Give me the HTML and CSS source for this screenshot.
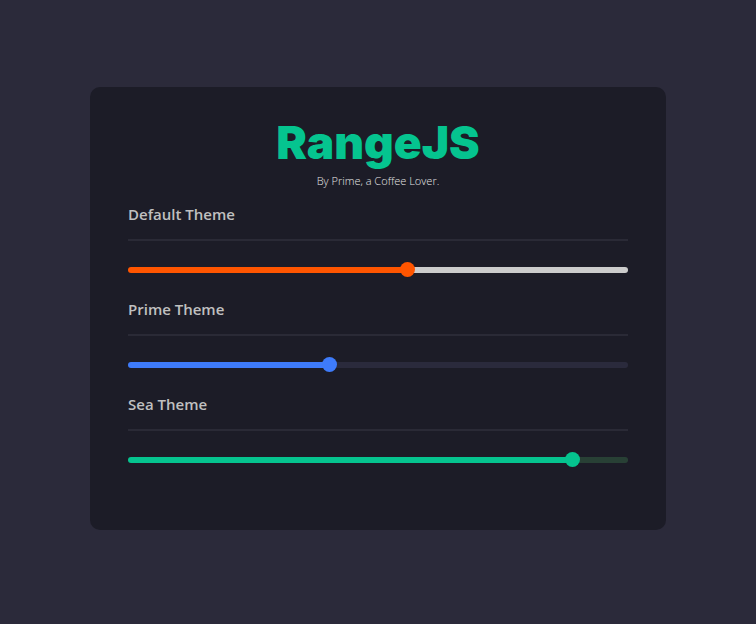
FILE: index.html
```html
<!DOCTYPE html>
<html lang="en">
<head>
<meta charset="utf-8">
<meta name="viewport" content="width=device-width, initial-scale=1">
<title>RangeJS</title>
<link rel="stylesheet" href="styles.css">
</head>
<body>
<main class="card">
  <header class="header">
    <h1 class="title">RangeJS</h1>
    <p class="byline">By Prime, a Coffee Lover.</p>
  </header>
  <section class="group">
    <label class="label" for="default-range">Default Theme</label>
    <input class="range range-default" id="default-range" type="range" min="0" max="100" step="any" value="56" style="--value: 56">
  </section>
  <section class="group">
    <label class="label" for="prime-range">Prime Theme</label>
    <input class="range range-prime" id="prime-range" type="range" min="0" max="100" step="any" value="40" style="--value: 40">
  </section>
  <section class="group">
    <label class="label" for="sea-range">Sea Theme</label>
    <input class="range range-sea" id="sea-range" type="range" min="0" max="100" step="any" value="90" style="--value: 90">
  </section>
</main>
</body>
</html>
```
FILE: styles.css
```css
* {
  box-sizing: border-box;
}

body {
  margin: 0;
  min-height: 100vh;
  padding: 80px 90px;
  display: flex;
  align-items: center;
  justify-content: center;
  background: #2b2a3a;
  color: #c0c0c0;
  font-family: "Open Sans", "Noto Sans", sans-serif;
}

.card {
  flex: 1;
  max-width: 576px;
  margin-bottom: 7px;
  padding: 24px 38px 50px;
  border-radius: 10px;
  background: #1c1c27;
}

.header {
  text-align: center;
}

.title {
  margin: 0;
  color: #05c48f;
  font-family: Inter, "Open Sans", sans-serif;
  font-size: 46px;
  font-weight: 900;
  line-height: 62px;
}

.byline {
  margin: 0 0 6px;
  color: #e4e4e4;
  font-size: 11px;
  font-weight: 300;
  line-height: 16px;
}

.group {
  height: 95px;
}

.label {
  display: block;
  padding: 8px 0 14px;
  border-bottom: 2px solid #2a2a36;
  font-size: 15px;
  font-weight: 600;
  line-height: 22px;
}

.range {
  display: block;
  appearance: none;
  width: 100%;
  height: 15px;
  margin: 21px 0 0;
  background: none;
}

.range::-webkit-slider-runnable-track {
  height: 6px;
  border-radius: 3px;
  background: linear-gradient(to right, var(--fill) calc(var(--value) * 1%), var(--rest) 0);
}

.range::-webkit-slider-thumb {
  appearance: none;
  width: 15px;
  height: 15px;
  margin-top: -5px;
  border-radius: 50%;
  background: var(--fill);
}

.range-default {
  --fill: #ff5500;
  --rest: #cccccc;
}

.range-prime {
  --fill: #3e7bfa;
  --rest: #2a2a3c;
}

.range-sea {
  --fill: #05c48f;
  --rest: #284035;
}
```
